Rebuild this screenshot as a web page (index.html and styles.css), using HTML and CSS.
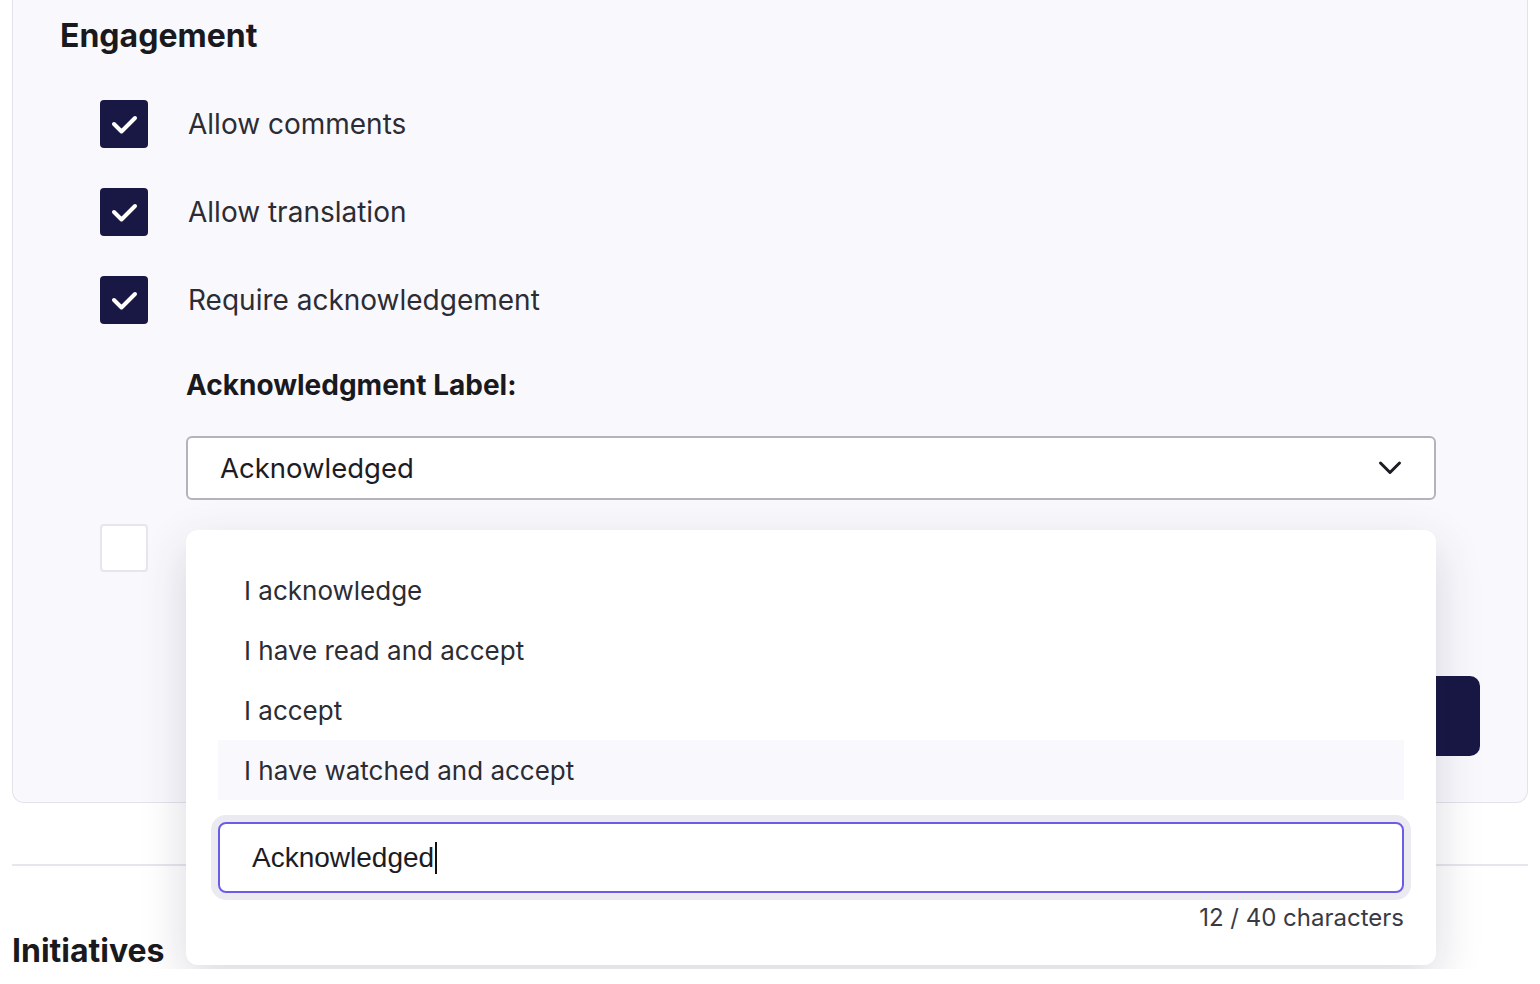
FILE: index.html
```html
<!DOCTYPE html>
<html lang="en">
<head>
  <meta charset="UTF-8" />
  <meta name="viewport" content="width=device-width, initial-scale=1.0"/>
  <title>Post settings</title>
  <link rel="stylesheet" href="styles.css">
</head>
<body>
  <div class="card">
    <h2 class="section-title">Engagement</h2>

    <ul class="check-list">
      <li class="check-row">
        <span class="check is-on">
          <svg viewBox="0 0 48 48" width="48" height="48"><path d="M14 24l7.5 7.5L35 18" /></svg>
        </span>
        <span class="check-label">Allow comments</span>
      </li>
      <li class="check-row">
        <span class="check is-on">
          <svg viewBox="0 0 48 48" width="48" height="48"><path d="M14 24l7.5 7.5L35 18" /></svg>
        </span>
        <span class="check-label">Allow translation</span>
      </li>
      <li class="check-row">
        <span class="check is-on">
          <svg viewBox="0 0 48 48" width="48" height="48"><path d="M14 24l7.5 7.5L35 18" /></svg>
        </span>
        <span class="check-label">Require acknowledgement</span>
      </li>
    </ul>

    <div class="ack">
      <label class="ack-label">Acknowledgment Label:</label>
      <div class="select-wrap">
        <div class="select">
          <span>Acknowledged</span>
          <svg class="chevron" viewBox="0 0 24 24" width="24" height="24"><path d="M2.5 7l9.5 9.5L21.5 7" /></svg>
        </div>

        <div class="menu">
          <ul class="menu-list">
            <li class="menu-item">I acknowledge</li>
            <li class="menu-item">I have read and accept</li>
            <li class="menu-item">I accept</li>
            <li class="menu-item is-active">I have watched and accept</li>
          </ul>
          <div class="custom-field">
            <span class="custom-value">Acknowledged</span><span class="caret"></span>
          </div>
          <div class="counter">12 / 40 characters</div>
        </div>
      </div>
    </div>

    <div class="check-row extra">
      <span class="check"></span>
    </div>

    <div class="actions">
      <button class="btn-primary" type="button"></button>
    </div>
  </div>

  <hr class="divider">

  <h2 class="section-title initiatives">Initiatives</h2>
</body>
</html>
```

FILE: styles.css
```css
body {
  margin: 0;
  padding: 0 12px;
  background: #fff;
  font-family: Inter, "Noto Sans", sans-serif;
  color: #2c2c34;
}
.card {
  background: #f9f9fd;
  border: 1px solid #e3e3eb;
  border-top: none;
  border-radius: 0 0 12px 12px;
  padding: 18px 47px 46px;
}
.section-title {
  margin: 0;
  font-size: 32px;
  line-height: 36px;
  font-weight: 700;
  color: #19191e;
}
.check-list {
  list-style-type: none;
  margin: 46px 0 0 40px;
  padding: 0;
  display: flex;
  flex-direction: column;
  gap: 40px;
}
.check-row {
  display: flex;
  align-items: center;
  gap: 40px;
}
.check {
  width: 48px;
  height: 48px;
  box-sizing: border-box;
  border-radius: 4px;
  border: 2px solid #e6e6ee;
  background: #fff;
  display: flex;
  align-items: center;
  justify-content: center;
  flex-shrink: 0;
}
.check.is-on {
  background: #191845;
  border: none;
}
.check svg path {
  fill: none;
  stroke: #fff;
  stroke-width: 4;
  stroke-linecap: round;
  stroke-linejoin: round;
}
.check-label {
  font-size: 28px;
  line-height: 34px;
  color: #2c2c34;
}
.ack {
  margin: 44px 0 0 126px;
  width: 1250px;
}
.ack-label {
  display: block;
  font-size: 28px;
  line-height: 34px;
  font-weight: 700;
  color: #19191e;
}
.select-wrap {
  position: relative;
  margin-top: 34px;
}
.select {
  height: 64px;
  box-sizing: border-box;
  border: 2px solid #b3b3ba;
  border-radius: 6px;
  background: #fff;
  display: flex;
  align-items: center;
  justify-content: space-between;
  padding: 0 32px 0 32px;
  font-size: 27.5px;
  color: #1c1c22;
}
.chevron path {
  fill: none;
  stroke: #1c1c22;
  stroke-width: 3;
  stroke-linecap: round;
  stroke-linejoin: round;
}
.menu {
  position: absolute;
  top: calc(100% + 30px);
  left: 0;
  right: 0;
  z-index: 5;
  background: #fff;
  border-radius: 12px;
  box-shadow: 0 16px 48px rgba(20, 20, 50, 0.16);
  padding: 30px 32px 34px;
}
.menu-list {
  list-style-type: none;
  margin: 0;
  padding: 0;
}
.menu-item {
  height: 60px;
  display: flex;
  align-items: center;
  padding-left: 26px;
  font-size: 26px;
  color: #2c2c34;
}
.menu-item.is-active {
  background: #f9f9fd;
}
.custom-field {
  margin-top: 22px;
  height: 71px;
  box-sizing: border-box;
  border: 2px solid #6b5ce7;
  border-radius: 8px;
  box-shadow: 0 0 0 7px #ebeaf0;
  display: flex;
  align-items: center;
  padding-left: 32px;
  font-family: "Liberation Sans", Arial, sans-serif;
  font-size: 28px;
  color: #1c1c22;
}
.caret {
  display: inline-block;
  width: 2px;
  height: 32px;
  background: #111;
  margin-left: 1px;
}
.counter {
  margin-top: 12px;
  text-align: right;
  font-size: 24px;
  line-height: 26px;
  color: #3a3a44;
}
.check-row.extra {
  margin: 24px 0 0 40px;
}
.actions {
  display: flex;
  justify-content: flex-end;
  margin-top: 104px;
}
.btn-primary {
  width: 320px;
  height: 80px;
  border: none;
  border-radius: 10px;
  background: #191845;
}
.divider {
  margin: 61px 0 0;
  border: none;
  border-top: 2px solid #e6e6ee;
}
.initiatives {
  margin-top: 67px;
}
```
